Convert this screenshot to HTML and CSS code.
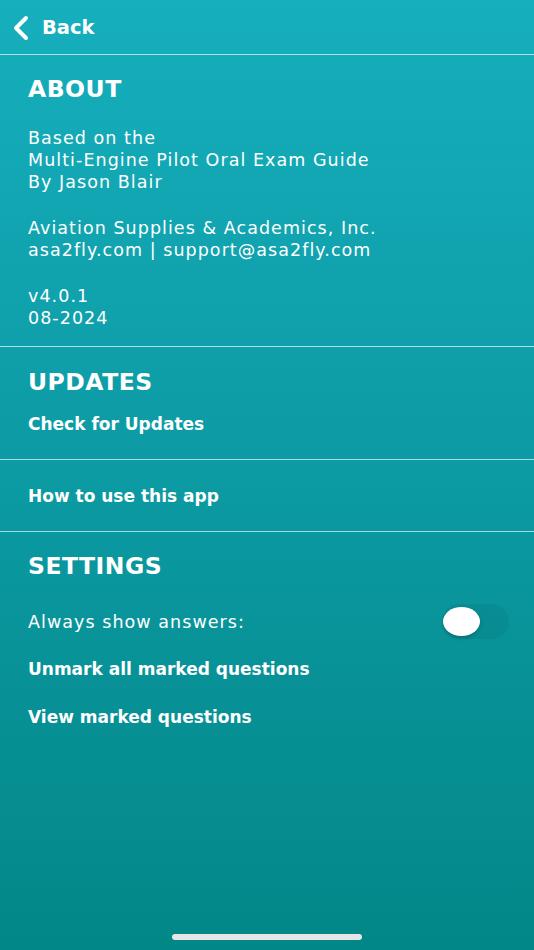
FILE: index.html
```html
<!DOCTYPE html>
<html lang="en">
<head>
<meta charset="utf-8">
<title>About</title>
<link rel="stylesheet" href="styles.css">
</head>
<body>
<div class="screen">
  <header class="topbar">
    <svg class="chev" width="18" height="26" viewBox="0 0 18 26"><path d="M14 3 L4 13 L14 23" fill="none" stroke="#fff" stroke-width="4" stroke-linecap="round" stroke-linejoin="round"/></svg>
    <span class="back">Back</span>
  </header>
  <section class="section about">
    <h2 class="heading">ABOUT</h2>
    <p class="para">Based on the<br>Multi-Engine Pilot Oral Exam Guide<br>By Jason Blair</p>
    <p class="para">Aviation Supplies &amp; Academics, Inc.<br>asa2fly.com | support@asa2fly.com</p>
    <p class="para">v4.0.1<br>08-2024</p>
  </section>
  <section class="section updates">
    <h2 class="heading">UPDATES</h2>
    <div class="link">Check for Updates</div>
  </section>
  <section class="section howto">
    <div class="link">How to use this app</div>
  </section>
  <section class="settings">
    <h2 class="heading">SETTINGS</h2>
    <div class="toggle-row">
      <span class="label">Always show answers:</span>
      <span class="switch"><span class="knob"></span></span>
    </div>
    <div class="link">Unmark all marked questions</div>
    <div class="link">View marked questions</div>
  </section>
  <div class="home-indicator"></div>
</div>
</body>
</html>
```
FILE: styles.css
```css
* { box-sizing: border-box; }
html, body { margin: 0; padding: 0; }
body {
  font-family: "DejaVu Sans", "Liberation Sans", sans-serif;
  color: #fff;
}
.screen {
  width: 534px;
  height: 950px;
  background: linear-gradient(180deg, #16afbd 0%, #0d9ca6 45%, #028787 100%);
  display: flex;
  flex-direction: column;
  position: relative;
  overflow: hidden;
}
.topbar {
  height: 55px;
  display: flex;
  align-items: center;
  padding-left: 12px;
  border-bottom: 1.5px solid rgba(255,255,255,0.65);
}
.chev { display: block; margin-right: 12px; margin-top: 2px; }
.back { font-size: 19.5px; font-weight: 700; }
.section {
  border-bottom: 1.5px solid rgba(255,255,255,0.65);
  padding: 0 28px;
}
.heading {
  margin: 0;
  font-size: 23.5px;
  font-weight: 700;
  line-height: 28px;
  letter-spacing: 0.5px;
}
.about { padding-top: 20px; padding-bottom: 17px; }
.para {
  margin: 24px 0 0;
  font-size: 17.5px;
  line-height: 22px;
  letter-spacing: 1.05px;
}
.link {
  font-size: 17px;
  font-weight: 700;
  line-height: 22px;
  letter-spacing: 0;
}
.updates { padding-top: 21px; padding-bottom: 24px; }
.updates .link { margin-top: 17px; }
.howto { padding-top: 25px; padding-bottom: 24px; }
.settings { padding: 20px 25px 0 28px; }
.toggle-row {
  display: flex;
  align-items: center;
  justify-content: space-between;
  margin-top: 24px;
}
.label { font-size: 17.5px; line-height: 22px; letter-spacing: 1.05px; }
.switch {
  width: 67px;
  height: 35px;
  border-radius: 18px;
  background: rgba(0,0,0,0.05);
  display: flex;
  align-items: center;
  padding-left: 1px;
}
.knob {
  width: 37px;
  height: 29px;
  border-radius: 50%;
  background: #fff;
  box-shadow: 0 2px 4px rgba(0,0,0,0.2);
}
.settings .link { margin-top: 26px; }
.settings .toggle-row + .link { margin-top: 19px; }
.home-indicator {
  position: absolute;
  left: 172px;
  bottom: 10px;
  width: 190px;
  height: 6px;
  border-radius: 3px;
  background: #e6e6e6;
}
```
